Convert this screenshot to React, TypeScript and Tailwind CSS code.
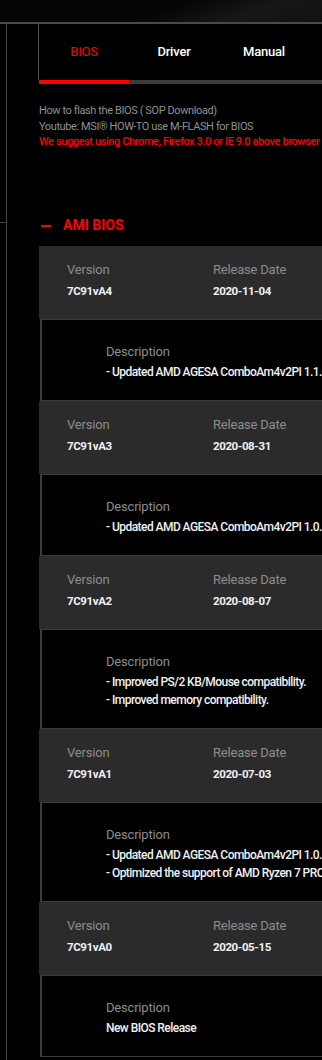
import React from "react";

type Item = { v: string; d: string; lines: string[] };

const items: Item[] = [
  { v: "7C91vA4", d: "2020-11-04", lines: ["- Updated AMD AGESA ComboAm4v2PI 1.1.0.0"] },
  { v: "7C91vA3", d: "2020-08-31", lines: ["- Updated AMD AGESA ComboAm4v2PI 1.0.8.1"] },
  { v: "7C91vA2", d: "2020-08-07", lines: ["- Improved PS/2 KB/Mouse compatibility.", "- Improved memory compatibility."] },
  { v: "7C91vA1", d: "2020-07-03", lines: ["- Updated AMD AGESA ComboAm4v2PI 1.0.0.2", "- Optimized the support of AMD Ryzen 7 PRO 4750G"] },
  { v: "7C91vA0", d: "2020-05-15", lines: ["New BIOS Release"] },
];

function Card({ item }: { item: Item }) {
  return (
    <div className="w-[400px]">
      <div className="bg-[#2b2b2b] h-[73px] pt-[16px] pl-[28px] flex">
        <div className="w-[146px]">
          <div className="text-[13px] leading-[16px] tracking-[-0.2px] text-[#8c8c8c]">Version</div>
          <div className="text-[11.5px] leading-[16px] tracking-[-0.4px] mt-[5px] font-bold text-[#f2f2f2]">{item.v}</div>
        </div>
        <div>
          <div className="text-[13px] leading-[16px] tracking-[-0.2px] text-[#8c8c8c]">Release Date</div>
          <div className="text-[11.5px] leading-[16px] tracking-[-0.4px] mt-[5px] font-bold text-[#f2f2f2]">{item.d}</div>
        </div>
      </div>
      <div className="ml-px bg-black border border-l-2 border-[#3c3c3c] pt-[24px] pb-[19px] pl-[64px] whitespace-nowrap">
        <div className="text-[13px] leading-[16px] tracking-[-0.2px] text-[#8c8c8c]">Description</div>
        <div className="mt-[3px]">
          {item.lines.map((l, i) => (
            <div key={i} className="text-[12px] leading-[18px] tracking-[-0.55px] font-medium text-[#f2f2f2]">
              {l}
            </div>
          ))}
        </div>
      </div>
    </div>
  );
}

export default function App() {
  return (
    <div className="w-[322px] h-[1060px] overflow-hidden bg-black font-['Roboto',sans-serif]">
      <div className="h-[22px] bg-[linear-gradient(160deg,#050505_0%,#050505_50%,#161717_75%,#101010_100%)]" />
      <div className="h-[2px] bg-[#4a4a4a]" />
      <div className="flex">
        <div className="w-[6px] shrink-0">
          <div className="mt-[198px] h-px bg-[#444]" />
        </div>
        <div className="border-l border-[#444] pl-[32px] min-h-[1040px]">
          <div className="w-[400px]">
            <div className="flex h-[56px] border-l border-[#555] -ml-px">
              <div className="w-[90px] flex items-center justify-center text-[13px] tracking-[-0.2px] text-[#ff0000]">BIOS</div>
              <div className="w-[90px] flex items-center justify-center text-[13px] tracking-[-0.2px] font-medium text-white">Driver</div>
              <div className="w-[90px] flex items-center justify-center text-[13px] tracking-[-0.2px] font-medium text-white">Manual</div>
            </div>
            <div className="flex h-[4px] bg-[#3c3c3c]">
              <div className="w-[90px] bg-[#ff0000]" />
            </div>
          </div>
          <div className="mt-[19px] text-[11px] leading-[15.5px] tracking-[-0.4px] whitespace-nowrap">
            <div className="text-[#8a9393]">How to flash the BIOS ( SOP Download)</div>
            <div className="text-[#8a9393]">Youtube: MSI® HOW-TO use M-FLASH for BIOS</div>
            <div className="text-[#ff0000] font-medium">We suggest using Chrome, Firefox 3.0 or IE 9.0 above browser</div>
          </div>
          <div className="mt-[66px] h-[20px] flex items-center">
            <div className="ml-[2px] w-[10px] h-[2px] bg-[#ff0000]" />
            <div className="ml-[12px] text-[14px] font-bold text-[#ff0000]">AMI BIOS</div>
          </div>
          <div className="mt-[10px]">
            {items.map((it) => (
              <Card key={it.v} item={it} />
            ))}
          </div>
        </div>
      </div>
    </div>
  );
}
